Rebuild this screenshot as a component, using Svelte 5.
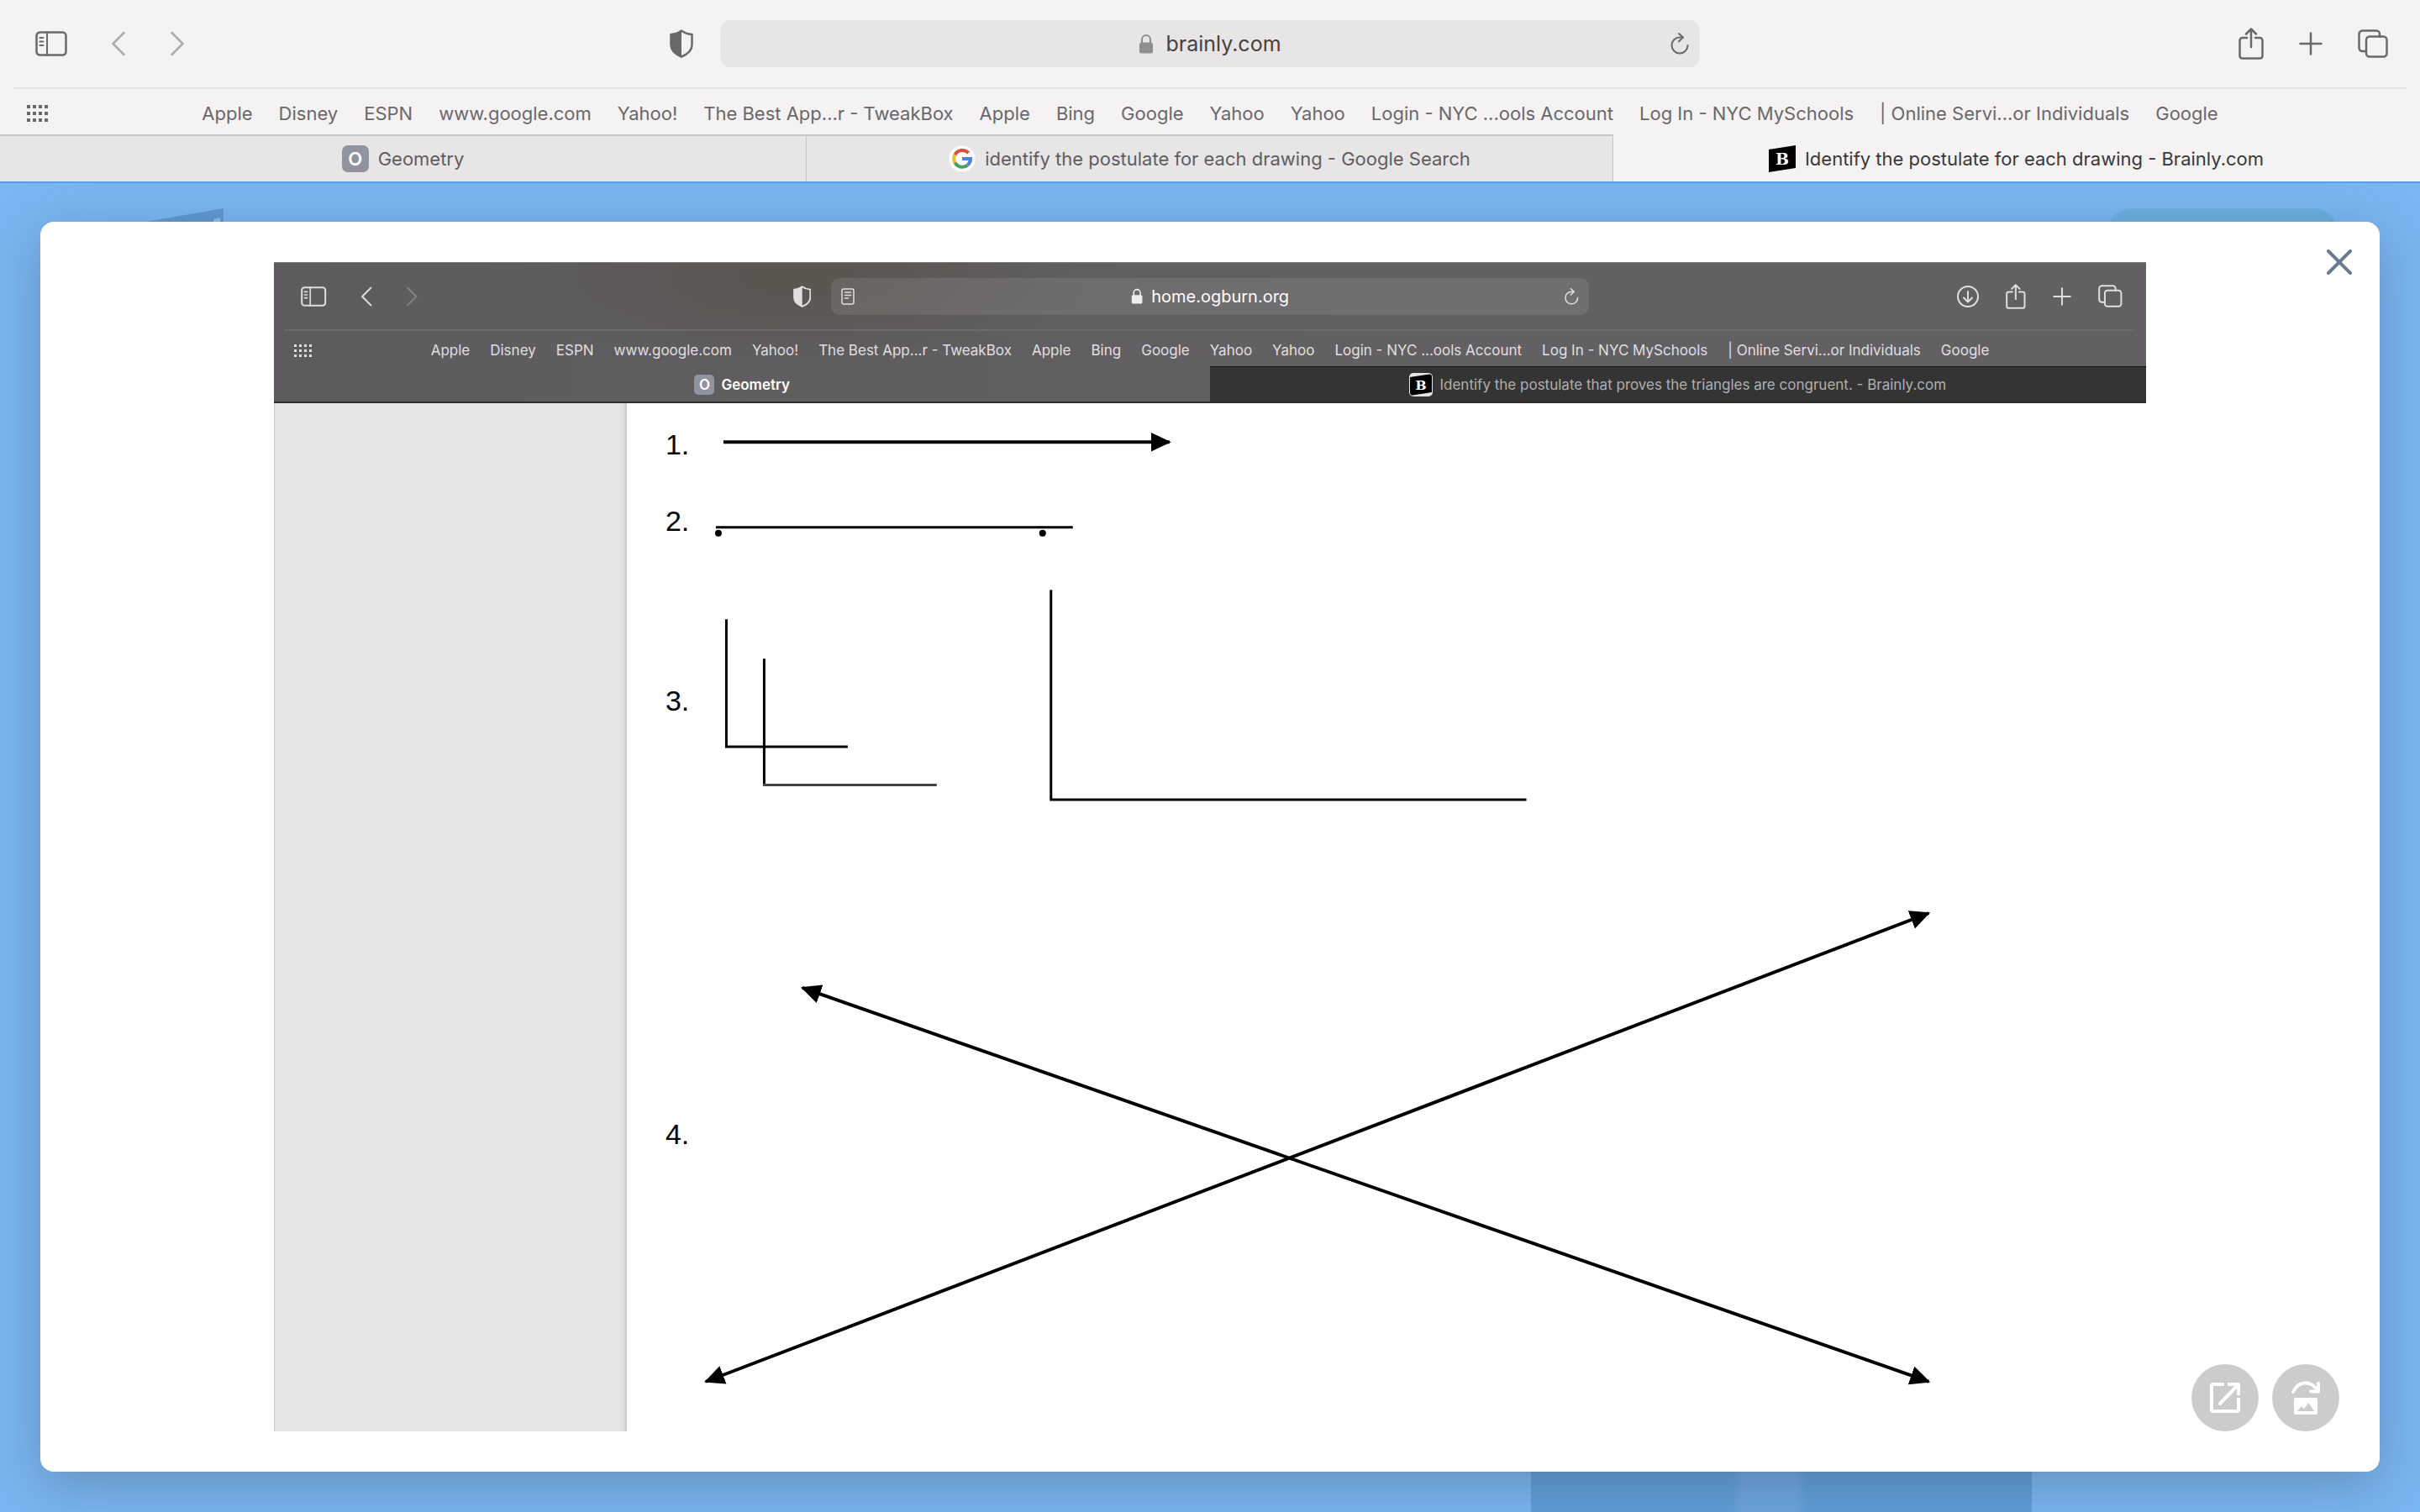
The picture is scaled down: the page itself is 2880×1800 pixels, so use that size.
<script>
    const links = [
        'Apple', 'Disney', 'ESPN', 'www.google.com', 'Yahoo!', 'The Best App...r - TweakBox',
        'Apple', 'Bing', 'Google', 'Yahoo', 'Yahoo', 'Login - NYC ...ools Account',
        'Log In - NYC MySchools', '| Online Servi...or Individuals', 'Google'
    ];

    const outer = {
        theme: 'light',
        url: 'brainly.com',
        canGoBack: false,
        reader: false,
        tools: ['share', 'plus', 'tabs'],
        size: { sidebar: 30, back: 30, forward: 30, shield: 34, lock: 24, reload: 26, share: 38, plus: 28, tabs: 34, badge: 32 },
        tabs: [
            { icon: 'letter', title: 'Geometry' },
            { icon: 'google', title: 'identify the postulate for each drawing - Google Search' },
            { icon: 'brainly', title: 'Identify the postulate for each drawing - Brainly.com', active: true }
        ]
    };

    const inner = {
        theme: 'dark',
        url: 'home.ogburn.org',
        canGoBack: true,
        reader: true,
        tools: ['download', 'share', 'plus', 'tabs'],
        size: { sidebar: 24, back: 24, forward: 24, shield: 26, lock: 19, reload: 20, reader: 20, download: 26, share: 30, plus: 22, tabs: 27, badge: 26 },
        tabs: [
            { icon: 'letter', title: 'Geometry', active: true },
            { icon: 'brainly', title: 'Identify the postulate that proves the triangles are congruent. - Brainly.com' }
        ]
    };

    const labels = {
        sidebar: 'Sidebar', back: 'Back', forward: 'Forward', shield: 'Privacy report', reload: 'Reload',
        reader: 'Reader', download: 'Downloads', share: 'Share', plus: 'New tab', tabs: 'Tab overview'
    };
</script>

{#snippet icon(name, h)}
    {#if name === 'sidebar'}
        <svg height={h} viewBox="0 0 38 30">
            <rect x="1.5" y="1.5" width="35" height="27" rx="4" />
            <path d="M14 1.5v27M5.5 8h4M5.5 12.5h4M5.5 17h4" stroke-width="2" />
        </svg>
    {:else if name === 'back'}
        <svg height={h} viewBox="0 0 18 30"><path d="M15.5 2L2.5 15l13 13" /></svg>
    {:else if name === 'forward'}
        <svg height={h} viewBox="0 0 18 30"><path d="M2.5 2l13 13-13 13" /></svg>
    {:else if name === 'shield'}
        <svg height={h} viewBox="0 0 28 34">
            <path d="M14 1.5C10 4.5 6 5.6 1.5 6v12.5C1.5 25 7 29.5 14 32.5 21 29.5 26.5 25 26.5 18.5V6C22 5.6 18 4.5 14 1.5z" />
            <path d="M14 1.5C10 4.5 6 5.6 1.5 6v12.5C1.5 25 7 29.5 14 32.5z" class="solid" />
        </svg>
    {:else if name === 'lock'}
        <svg height={h} viewBox="0 0 18 24">
            <path d="M4 11V7a5 5 0 0 1 10 0v4" stroke-width="2" />
            <rect x="1" y="10.5" width="16" height="13" rx="2.5" class="solid" />
        </svg>
    {:else if name === 'reload'}
        <svg height={h} viewBox="0 0 24 26">
            <path d="M14 5.5H12A9.5 9.5 0 1 0 21.5 15" stroke-width="2" />
            <path d="M11 1l5 4.5-5 4.8" stroke-width="2" />
        </svg>
    {:else if name === 'reader'}
        <svg height={h} viewBox="0 0 16 20">
            <rect x="1" y="1" width="14" height="18" rx="2" stroke-width="1.5" />
            <path d="M4.5 5h7M4.5 8.5h7M4.5 12h4" stroke-width="1.5" />
        </svg>
    {:else if name === 'download'}
        <svg height={h} viewBox="0 0 26 26">
            <circle cx="13" cy="13" r="12" stroke-width="2" />
            <path d="M13 7v12M8 14.5l5 5 5-5" stroke-width="2" />
        </svg>
    {:else if name === 'share'}
        <svg height={h} viewBox="0 0 30 38">
            <path d="M10 12H4.5a3 3 0 0 0-3 3v18.5a3 3 0 0 0 3 3h21a3 3 0 0 0 3-3V15a3 3 0 0 0-3-3H20" />
            <path d="M15 23V2M9 7.5L15 1.5l6 6" />
        </svg>
    {:else if name === 'plus'}
        <svg height={h} viewBox="0 0 28 28"><path d="M14 1.5v25M1.5 14h25" /></svg>
    {:else if name === 'tabs'}
        <svg height={h} viewBox="0 0 36 34">
            <rect x="10" y="8.5" width="24.5" height="24" rx="4" />
            <path d="M9.5 26H5.5a4 4 0 0 1-4-4V5.5a4 4 0 0 1 4-4H22a4 4 0 0 1 4 4v3" />
        </svg>
    {/if}
{/snippet}

{#snippet toolButton(bar, name, disabled = false)}
    <button type="button" class="tool" aria-label={labels[name]} {disabled}>{@render icon(name, bar.size[name])}</button>
{/snippet}

{#snippet favicon(kind, h)}
    {#if kind === 'letter'}
        <span class="letter">O</span>
    {:else if kind === 'google'}
        <svg height={h} viewBox="0 0 32 32">
            <circle cx="16" cy="16" r="15.5" fill="#fff" />
            <g fill="none" stroke-width="4">
                <path d="M23.5 9A10 10 0 0 0 7.5 11.2" stroke="#d9503f" />
                <path d="M7.5 11.2A10 10 0 0 0 7.5 20.8" stroke="#f0b92f" />
                <path d="M7.5 20.8A10 10 0 0 0 22.5 23.6" stroke="#4ba15a" />
                <path d="M22.5 23.6A10 10 0 0 0 26 16H16" stroke="#4d82d8" />
            </g>
        </svg>
    {:else}
        <svg class="brainly" height={h} viewBox="0 0 32 32">
            <path d="M0 5L32 0v27L0 32z" fill="#000" />
            <text x="16" y="23" text-anchor="middle">B</text>
        </svg>
    {/if}
{/snippet}

{#snippet chrome(bar)}
    <header class="chrome {bar.theme}">
        <div class="toolbar">
            <div class="side">
                {@render toolButton(bar, 'sidebar')}
                {@render toolButton(bar, 'back', !bar.canGoBack)}
                {@render toolButton(bar, 'forward', true)}
                <span class="spacer"></span>
                {@render toolButton(bar, 'shield')}
            </div>
            <div class="address">
                <div class="edge">
                    {#if bar.reader}{@render toolButton(bar, 'reader')}{/if}
                </div>
                <label class="url">
                    <span class="lock">{@render icon('lock', bar.size.lock)}</span>
                    <input type="text" value={bar.url} aria-label="Address" />
                </label>
                <div class="edge end">{@render toolButton(bar, 'reload')}</div>
            </div>
            <div class="side end">
                {#each bar.tools as name}
                    {@render toolButton(bar, name)}
                {/each}
            </div>
        </div>

        <nav class="bookmarks" aria-label="Favorites">
            <button type="button" class="grid-button" aria-label="Show favorites">
                {#each Array(12) as _}<i></i>{/each}
            </button>
            {#each links as link}
                <a href="#top">{link}</a>
            {/each}
        </nav>

        <div class="tabs">
            {#each bar.tabs as tab}
                <button type="button" class="tab" class:active={tab.active}>
                    {@render favicon(tab.icon, bar.size.badge)}
                    <span>{tab.title}</span>
                </button>
            {/each}
        </div>
    </header>
{/snippet}

<div class="window">
    {@render chrome(outer)}

    <main class="page">
        <div class="page-top">
            <svg class="logo" viewBox="0 0 92 48">
                <path d="M0 16L92 0v40L0 48z" />
                <path d="M80 13l8-2v8h-8z" class="glint" />
            </svg>
            <span class="join"></span>
        </div>
        <div class="page-bottom"><span class="photo"></span></div>

        <div class="modal" role="dialog" aria-label="Attachment">
            <figure class="shot">
                {@render chrome(inner)}
                <div class="document">
                    <div class="gutter"></div>
                    <svg class="sheet" viewBox="0 0 1808 1224">
                        <defs>
                            <marker id="head" viewBox="0 0 24 24" refX="22" refY="12" markerWidth="24" markerHeight="24" markerUnits="userSpaceOnUse" orient="auto-start-reverse">
                                <path d="M0 0.5L24 12 0 23.5z" fill="#000" />
                            </marker>
                        </defs>
                        <g class="numbers">
                            <text x="46" y="61">1.</text>
                            <text x="46" y="152">2.</text>
                            <text x="46" y="366">3.</text>
                            <text x="46" y="882">4.</text>
                        </g>
                        <g class="strokes">
                            <path d="M115 46H646" stroke-width="4" marker-end="url(#head)" />
                            <path d="M106 147.5H531" />
                            <path d="M118.5 257V409H263" />
                            <path d="M163.5 304V454" />
                            <path d="M162 454.5H369" stroke="#444" />
                            <path d="M505 222V472H1071" />
                            <path d="M209 696L1550 1165" stroke-width="4" marker-start="url(#head)" marker-end="url(#head)" />
                            <path d="M94 1165L1550 607" stroke-width="4" marker-start="url(#head)" marker-end="url(#head)" />
                        </g>
                        <circle cx="109" cy="154.5" r="4" />
                        <circle cx="495" cy="154.5" r="4" />
                    </svg>
                </div>
            </figure>

            <button type="button" class="close" aria-label="Close">
                <svg width="30" height="30" viewBox="0 0 30 30"><path d="M2 2l26 26M28 2L2 28" /></svg>
            </button>

            <div class="actions">
                <button type="button" aria-label="Open in new tab">
                    <svg width="38" height="38" viewBox="0 0 38 38">
                        <path d="M18 3H5a2 2 0 0 0-2 2v28a2 2 0 0 0 2 2h28a2 2 0 0 0 2-2V19" class="flat" />
                        <path d="M13 26L33 5" />
                        <path d="M22 3h13v13" class="flat" />
                    </svg>
                </button>
                <button type="button" aria-label="Rotate image">
                    <svg width="38" height="42" viewBox="0 0 38 42">
                        <path d="M4 14C10 1 25 0 32 11" />
                        <path d="M34 4v9.5h-9" />
                        <path d="M7 21h24a2 2 0 0 1 2 2v16a2 2 0 0 1-2 2H7a2 2 0 0 1-2-2V23a2 2 0 0 1 2-2z" class="card" />
                        <path d="M9 37l5-6 3 3 5.5-7L29 37z" class="hill" />
                    </svg>
                </button>
            </div>
        </div>
    </main>
</div>

<style>
    :global(body) { background: #7ab6f1; }

    button, input { font: inherit; color: inherit; background: none; border: 0; padding: 0; margin: 0; }
    button { display: flex; align-items: center; justify-content: center; }
    svg { display: block; flex: none; }

    .window {
        display: flex;
        flex-direction: column;
        min-height: 100vh;
        font-family: Inter, "Liberation Sans", sans-serif;
    }

    /* browser bars, in two sizes */
    .chrome {
        --pad: 42px;
        --pad-end: 38px;
        --gap: 52px;
        --tool-gap: 42px;
        color: #6a686a;
        background: #f4f2f3;
        border-bottom: 2px solid #5a9cdd;
        box-sizing: border-box;
    }
    .chrome.dark {
        --pad: 32px;
        --pad-end: 28px;
        --gap: 40px;
        --tool-gap: 32px;
        color: #e0dfe0;
        background: radial-gradient(ellipse 340px 110px at 28% 10%, #5a554e, #5e5c5f00), linear-gradient(90deg, #5d5b5d, #626063 60%);
        border-top: 1px solid #7a797a;
        border-bottom-color: #2c2c2c;
    }

    .toolbar {
        display: grid;
        grid-template-columns: 1fr 40.5% 1fr;
        align-items: center;
        height: 104px;
    }
    .dark .toolbar { height: 79px; }
    .toolbar svg { fill: none; stroke: currentColor; stroke-width: 2.5px; stroke-linecap: round; stroke-linejoin: round; }
    .toolbar svg .solid { fill: currentColor; stroke: none; }
    .tool:disabled { opacity: 0.5; }
    .dark .tool:disabled { opacity: 0.3; }

    .side { display: flex; align-items: center; gap: var(--gap); padding: 0 32px 0 var(--pad); }
    .dark .side { padding-right: 24px; }
    .side.end, .dark .side.end { justify-content: flex-end; gap: var(--tool-gap); padding: 0 var(--pad-end) 0 0; }
    .spacer { flex: 1; }

    .address {
        display: flex;
        align-items: center;
        height: 56px;
        border-radius: 12px;
        background: #e7e5e6;
    }
    .dark .address { height: 44px; border-radius: 10px; background: rgba(255, 255, 255, 0.09); }
    .edge { display: flex; flex: 1; padding: 0 12px; }
    .edge.end { justify-content: flex-end; }
    .url { display: flex; align-items: center; gap: 14px; color: #444244; font-size: 25px; line-height: 32px; }
    .dark .url { gap: 10px; color: #fff; font-size: 20px; line-height: 24px; }
    .url input { field-sizing: content; outline: 0; }
    .lock { color: #8f8d8f; }
    .dark .lock { color: #eee; }

    .bookmarks {
        position: relative;
        display: flex;
        align-items: center;
        justify-content: center;
        gap: 31px;
        height: 56px;
        padding-top: 4px;
        font-size: 22px;
        border-top: 2px solid #e6e4e5;
        margin: 0 16px;
        box-sizing: border-box;
    }
    .dark .bookmarks { gap: 24px; height: 44px; font-size: 17px; border-color: #6b696c; margin: 0 12px; }
    .bookmarks a { color: inherit; text-decoration: none; white-space: nowrap; }
    .grid-button { position: absolute; left: 16px; display: grid; grid-template-columns: repeat(4, 4px); gap: 4px 3px; }
    .grid-button i { height: 4px; background: currentColor; }
    .dark .grid-button { left: 12px; grid-template-columns: repeat(4, 3px); gap: 3px; }
    .dark .grid-button i { height: 3px; }

    .tabs { display: flex; height: 56px; font-size: 22px; }
    .dark .tabs { height: 42px; font-size: 17px; }
    .tab {
        flex: 1 1 0;
        gap: 11px;
        min-width: 0;
        white-space: nowrap;
        color: #5f5d5f;
        background: #e7e5e6;
        border-top: 2px solid #c6c4c5;
        border-right: 1px solid #c9c7c8;
        box-sizing: border-box;
    }
    .tab.active { color: #3a383a; background: none; border-color: transparent; }
    .dark .tab { gap: 8px; color: #b0afb0; background: #343434; border-top: 1px solid #111; border-right: 0; }
    .dark .tab.active { color: #fff; background: none; border-color: transparent; font-weight: 600; }
    .letter {
        display: flex;
        align-items: center;
        justify-content: center;
        width: 32px;
        height: 32px;
        border-radius: 7px;
        color: #fff;
        background: #9293a0;
        font-size: 22px;
        font-weight: 600;
    }
    .dark .letter { width: 24px; height: 24px; border-radius: 5px; font-size: 17px; }
    .brainly text { font: bold 19px "DejaVu Serif", serif; fill: #fff; }
    .dark .brainly { padding: 1px; background: #e4e4e4; border-radius: 5px; }

    /* page seen behind the modal */
    .page { position: relative; flex: 1; display: flex; flex-direction: column; justify-content: space-between; background: #7ab6f1; overflow: hidden; }
    .page-top { display: flex; align-items: flex-start; justify-content: space-between; padding: 30px 96px 0 174px; }
    .logo { width: 92px; height: 48px; }
    .logo path { fill: #5f98d2; }
    .logo .glint { fill: #8cbcec; }
    .join { width: 278px; height: 80px; border-radius: 32px; background: #68b0e0; }
    .page-bottom { display: flex; justify-content: flex-end; padding-right: 462px; }
    .photo { width: 596px; height: 96px; background: linear-gradient(90deg, #609ed7 40%, #6ca5de 42% 53%, #609ed7 55%); }

    .modal {
        position: absolute;
        inset: 46px 48px 48px;
        display: flex;
        justify-content: center;
        padding: 48px;
        background: #fff;
        border-radius: 16px;
        box-shadow: 0 16px 64px rgba(60, 70, 100, 0.35);
        box-sizing: border-box;
    }
    .shot { display: flex; flex-direction: column; height: 100%; aspect-ratio: 8 / 5; margin: 0; }
    .document { flex: 1; display: flex; min-height: 0; }
    .gutter { flex: 0 0 420px; background: linear-gradient(270deg, #c4c4c4, #dedede 4px, #e5e5e5 10px); border-left: 1px solid #c8c8c8; box-sizing: border-box; }
    .sheet { flex: 1; min-width: 0; height: 100%; }
    .numbers { font: 34px "Liberation Sans", Arial, sans-serif; }
    .strokes { fill: none; stroke: #000; stroke-width: 3px; }

    .close { position: absolute; top: 33px; right: 33px; }
    .close path { stroke: #687b8f; stroke-width: 4px; stroke-linecap: round; }

    .actions { position: absolute; right: 48px; bottom: 48px; display: flex; gap: 16px; }
    .actions button { width: 80px; height: 80px; border-radius: 50%; background: #ccc; }
    .actions path { fill: none; stroke: #fff; stroke-width: 4px; stroke-linecap: round; stroke-linejoin: round; }
    .actions .flat { stroke-linecap: butt; }
    .actions .card { fill: #fff; stroke: none; }
    .actions .hill { fill: #ccc; stroke: none; }
</style>
